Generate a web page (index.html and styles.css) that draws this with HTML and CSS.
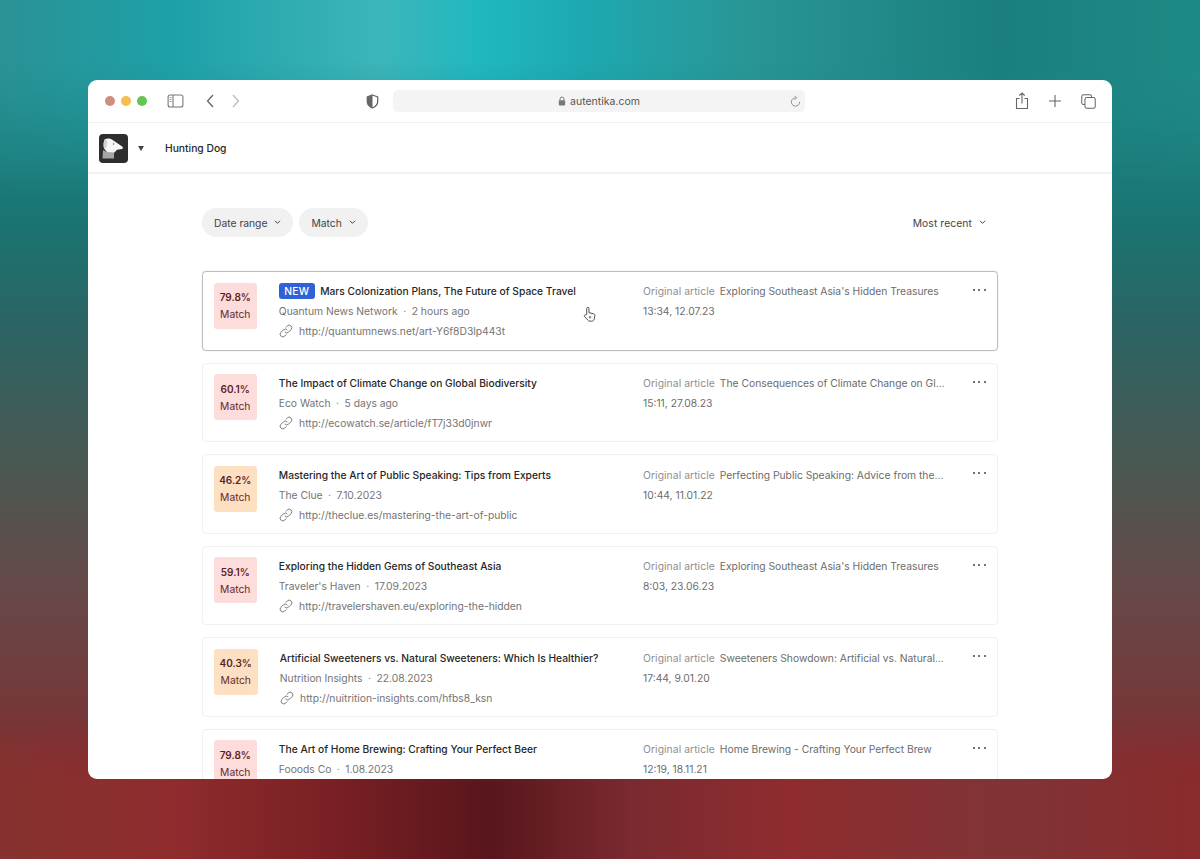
FILE: index.html
```html
<!DOCTYPE html>
<html lang="en">
<head>
<meta charset="utf-8">
<title>Autentika</title>
<link rel="stylesheet" href="styles.css">
</head>
<body>
<div class="window">
  <div class="toolbar">
    <div class="lights"><span class="light red"></span><span class="light yellow"></span><span class="light green"></span></div>
    <svg class="ico sidebar" viewBox="0 0 16 14" width="17" height="14"><rect x=".6" y="1" width="14.8" height="12" rx="2" fill="none" stroke="#777" stroke-width="1.1"/><path d="M5.5 1v12" stroke="#777" stroke-width="1.1"/><path d="M2.2 3.5h1.8M2.2 5.5h1.8M2.2 7.5h1.8" stroke="#999" stroke-width="1"/></svg>
    <svg class="ico back" viewBox="0 0 10 16" width="10" height="16"><path d="M8 2 2.500 8 8 14" fill="none" stroke="#666" stroke-width="1.300"/></svg>
    <svg class="ico forward" viewBox="0 0 10 16" width="10" height="16"><path d="M2 2 7.500 8 2 14" fill="none" stroke="#bbb" stroke-width="1.300"/></svg>
    <svg class="ico shield" viewBox="0 0 14 16" width="13" height="15"><path d="M7 1 12.600 3v5c0 3.300-2.400 5.500-5.600 7C3.800 13.500 1.400 11.300 1.400 8V3z" fill="#fff" stroke="#666" stroke-width="1.400"/><path d="M7 1 1.400 3v5c0 3.300 2.400 5.500 5.600 7z" fill="#666"/></svg>
    <div class="address">
      <svg viewBox="0 0 10 12" width="8" height="10"><path d="M2.500 5V3.500a2.500 2.500 0 0 1 5 0V5" fill="none" stroke="#777" stroke-width="1.200"/><rect x="1" y="5" width="8" height="6.500" rx="1" fill="#777"/></svg>
      <span>autentika.com</span>
      <svg class="reload" viewBox="0 0 12 14" width="11" height="13"><path d="M6 3a4.500 4.500 0 1 0 4.500 4.500" fill="none" stroke="#888" stroke-width="1"/><path d="M5 .8 7.200 3 5 5.200" fill="none" stroke="#888" stroke-width="1"/></svg>
    </div>
    <div class="tools">
      <svg viewBox="0 0 14 18" width="14" height="18"><path d="M4.500 6.500H1.500v10h11v-10H9.500M7 11.500V1M4.300 3.500 7 1l2.700 2.500" fill="none" stroke="#666" stroke-width="1.100"/></svg>
      <svg viewBox="0 0 14 14" width="14" height="14"><path d="M7 1v12M1 7h12" stroke="#666" stroke-width="1.100"/></svg>
      <svg viewBox="0 0 16 16" width="15" height="15"><rect x=".8" y=".8" width="10.500" height="10.500" rx="2" fill="none" stroke="#666" stroke-width="1.100"/><rect x="4.200" y="3.800" width="11" height="11.400" rx="2" fill="#fff" stroke="#666" stroke-width="1.100"/></svg>
    </div>
  </div>
  <div class="appbar">
    <div class="logo">
      <svg viewBox="0 0 29 29" width="29" height="29"><rect width="29" height="29" rx="4" fill="#2e2e2e"/><path d="M4 16 3.500 24.500H15V18H8z" fill="#a6a6a6"/><path d="M6 5C9 3.800 12 4.500 14 6.200L23.500 12.800c.8.800.5 2-.6 2.200L18 15.800 15.500 18.500 8 18 5 14.500C4.200 11 4.500 7 6 5z" fill="#f6f6f6"/><path d="M6 5.200C7.500 5 8.300 6.500 8.300 9c0 2.500-.6 4.500-2.300 6l-1-.5C4.200 11 4.500 7 6 5.200z" fill="#d2d2d2"/><circle cx="14.500" cy="10" r=".7" fill="#555"/></svg>
    </div>
    <span class="caret"></span>
    <span class="appname">Hunting Dog</span>
  </div>
  <main class="content">
    <div class="filters">
      <button class="pill">Date range <svg class="chev" viewBox="0 0 8 6" width="7" height="5"><path d="M1 1l3 3 3-3" fill="none" stroke="#444" stroke-width="1.200"/></svg></button>
      <button class="pill">Match <svg class="chev" viewBox="0 0 8 6" width="7" height="5"><path d="M1 1l3 3 3-3" fill="none" stroke="#444" stroke-width="1.200"/></svg></button>
      <button class="sort">Most recent <svg class="chev" viewBox="0 0 8 6" width="7" height="5"><path d="M1 1l3 3 3-3" fill="none" stroke="#444" stroke-width="1.200"/></svg></button>
    </div>
    <div class="list">
      <article class="card hover">
        <div class="score red-score"><b>79.8%</b><span>Match</span></div>
        <div class="info">
          <h3><span class="new">NEW</span>Mars Colonization Plans, The Future of Space Travel</h3>
          <p>Quantum News Network<i>·</i>2 hours ago</p>
          <p class="url"><svg class="link" viewBox="0 0 16 16" width="14" height="14"><use href="#link"/></svg>http://quantumnews.net/art-Y6f8D3lp443t</p>
        </div>
        <div class="orig">
          <p class="origline"><em>Original article</em><span>Exploring Southeast Asia's Hidden Treasures</span></p>
          <p>13:34, 12.07.23</p>
        </div>
        <div class="more"><s></s><s></s><s></s></div>
        <svg class="cursor" viewBox="0 0 14 18" width="13" height="17"><path d="M4 9V2.500a1.200 1.200 0 0 1 2.400 0V7l5 1.200c1 .3 1.600 1 1.400 2.200l-.8 3.600c-.3 1.300-1.300 2.200-2.700 2.200H7.500c-1 0-1.800-.4-2.400-1.200L1.500 11c-.6-.9.700-2.300 1.800-1.400z" fill="#fff" stroke="#444" stroke-width="1"/><circle cx="7.500" cy="12" r="1.300" fill="#888"/></svg>
      </article>
      <article class="card">
        <div class="score red-score"><b>60.1%</b><span>Match</span></div>
        <div class="info">
          <h3>The Impact of Climate Change on Global Biodiversity</h3>
          <p>Eco Watch<i>·</i>5 days ago</p>
          <p class="url"><svg class="link" viewBox="0 0 16 16" width="14" height="14"><use href="#link"/></svg>http://ecowatch.se/article/fT7j33d0jnwr</p>
        </div>
        <div class="orig">
          <p class="origline"><em>Original article</em><span>The Consequences of Climate Change on Gl...</span></p>
          <p>15:11, 27.08.23</p>
        </div>
        <div class="more"><s></s><s></s><s></s></div>
      </article>
      <article class="card">
        <div class="score orange-score"><b>46.2%</b><span>Match</span></div>
        <div class="info">
          <h3>Mastering the Art of Public Speaking: Tips from Experts</h3>
          <p>The Clue<i>·</i>7.10.2023</p>
          <p class="url"><svg class="link" viewBox="0 0 16 16" width="14" height="14"><use href="#link"/></svg>http://theclue.es/mastering-the-art-of-public</p>
        </div>
        <div class="orig">
          <p class="origline"><em>Original article</em><span>Perfecting Public Speaking: Advice from the...</span></p>
          <p>10:44, 11.01.22</p>
        </div>
        <div class="more"><s></s><s></s><s></s></div>
      </article>
      <article class="card">
        <div class="score red-score"><b>59.1%</b><span>Match</span></div>
        <div class="info">
          <h3>Exploring the Hidden Gems of Southeast Asia</h3>
          <p>Traveler's Haven<i>·</i>17.09.2023</p>
          <p class="url"><svg class="link" viewBox="0 0 16 16" width="14" height="14"><use href="#link"/></svg>http://travelershaven.eu/exploring-the-hidden</p>
        </div>
        <div class="orig">
          <p class="origline"><em>Original article</em><span>Exploring Southeast Asia's Hidden Treasures</span></p>
          <p>8:03, 23.06.23</p>
        </div>
        <div class="more"><s></s><s></s><s></s></div>
      </article>
      <article class="card">
        <div class="score orange-score wide"><b>40.3%</b><span>Match</span></div>
        <div class="info">
          <h3>Artificial Sweeteners vs. Natural Sweeteners: Which Is Healthier?</h3>
          <p>Nutrition Insights<i>·</i>22.08.2023</p>
          <p class="url"><svg class="link" viewBox="0 0 16 16" width="14" height="14"><use href="#link"/></svg>http://nuitrition-insights.com/hfbs8_ksn</p>
        </div>
        <div class="orig">
          <p class="origline"><em>Original article</em><span>Sweeteners Showdown: Artificial vs. Natural...</span></p>
          <p>17:44, 9.01.20</p>
        </div>
        <div class="more"><s></s><s></s><s></s></div>
      </article>
      <article class="card">
        <div class="score red-score"><b>79.8%</b><span>Match</span></div>
        <div class="info">
          <h3>The Art of Home Brewing: Crafting Your Perfect Beer</h3>
          <p>Fooods Co<i>·</i>1.08.2023</p>
        </div>
        <div class="orig">
          <p class="origline"><em>Original article</em><span>Home Brewing - Crafting Your Perfect Brew</span></p>
          <p>12:19, 18.11.21</p>
        </div>
        <div class="more"><s></s><s></s><s></s></div>
      </article>
    </div>
  </main>
</div>
<svg class="defs" width="0" height="0"><defs><g id="link" fill="none" stroke="#777" stroke-width="1.100" stroke-linecap="round"><path d="M6.700 9.300a3 3 0 0 0 4.300 0l2.800-2.800a3 3 0 0 0-4.300-4.300L8 3.700"/><path d="M9.300 6.700a3 3 0 0 0-4.300 0L2.200 9.500a3 3 0 0 0 4.300 4.300L8 12.300"/></g></defs></svg>
</body>
</html>
```
FILE: styles.css
```css
* { box-sizing: border-box; }
html, body { height: 100%; }
body {
  position: relative;
  margin: 0;
  height: 859px;
  overflow: hidden;
  padding: 80px 88px;
  font-family: Inter, "Liberation Sans", sans-serif;
  background: linear-gradient(180deg, #1f8f8f 0%, #1a7472 26%, #2b6463 38%, #50554f 57%, #684748 70%, #763739 83%, #8a2c2e 93%, #8a2a2c 100%);
}
body::before,
body::after {
  content: "";
  position: absolute;
  left: 0;
  right: 0;
}
body::before {
  top: 0;
  height: 200px;
  background: linear-gradient(90deg, #2a9295 0, #1ea0a8 170px, #3cb6ba 380px, #20b8c0 480px, #1ea8b0 590px, #2a9595 750px, #1a7f7e 1000px, #1f8a85 1200px);
  -webkit-mask-image: linear-gradient(180deg, #000 60px, transparent 200px);
  mask-image: linear-gradient(180deg, #000 60px, transparent 200px);
}
body::after {
  bottom: 0;
  height: 140px;
  background: linear-gradient(90deg, #86322f 0, #8f2c2e 170px, #7a2024 330px, #58161c 490px, #7a2a30 630px, #8f2c2f 790px, #803436 1000px, #8a2a2c 1200px);
  -webkit-mask-image: linear-gradient(0deg, #000 75px, transparent 140px);
  mask-image: linear-gradient(0deg, #000 75px, transparent 140px);
}
p, h3 { margin: 0; }
.defs { position: absolute; }
.window {
  position: relative;
  z-index: 1;
  width: 1024px;
  height: 699px;
  background: #fff;
  border-radius: 9px;
  overflow: hidden;
}
.toolbar {
  height: 43px;
  display: flex;
  align-items: center;
  padding-left: 17px;
  border-bottom: 1px solid #f1f1f1;
}
.lights { display: flex; gap: 6px; }
.light { width: 10px; height: 10px; border-radius: 50%; }
.red { background: #cf8f80; }
.yellow { background: #f6bd4f; }
.green { background: #62c554; }
.sidebar { margin-left: 20px; }
.back { margin-left: 21px; }
.forward { margin-left: 16px; }
.shield { margin-left: 125px; }
.address {
  position: relative;
  width: 412px;
  height: 22px;
  margin-left: 14px;
  border-radius: 5px;
  background: #f4f4f4;
  display: flex;
  align-items: center;
  justify-content: center;
  gap: 4px;
  font-size: 10.500px;
  color: #555;
}
.reload { position: absolute; right: 4px; top: 5px; }
.tools {
  display: flex;
  align-items: center;
  gap: 19px;
  margin-left: 210px;
}
.appbar {
  height: 51px;
  display: flex;
  align-items: center;
  padding-left: 11px;
  padding-top: 1px;
  border-bottom: 2px solid #f2f2f2;
}
.logo { height: 29px; }
.caret {
  width: 0;
  height: 0;
  margin-left: 10px;
  border-left: 3.500px solid transparent;
  border-right: 3.500px solid transparent;
  border-top: 5px solid #444;
}
.appname { margin-left: 21px; font-size: 10.300px; font-weight: 500; color: #2a2a2a; }
.content { padding: 34px 114px 0; }
.filters { display: flex; align-items: flex-start; gap: 6px; height: 30px; }
button { font: inherit; border: 0; color: #444; }
.pill {
  height: 29px;
  padding: 0 12px;
  border-radius: 15px;
  background: #f1f1f1;
  font-size: 10.300px;
  display: flex;
  align-items: center;
  gap: 7px;
}
.sort {
  height: 29px;
  margin-left: auto;
  margin-right: 12px;
  background: none;
  font-size: 10.300px;
  letter-spacing: .1px;
  display: flex;
  align-items: center;
  gap: 7px;
  padding: 0;
}
.list { margin-top: 33px; display: flex; flex-direction: column; gap: 12px; }
.card {
  position: relative;
  flex: none;
  height: 79.600px;
  border: 1px solid #f0f0f0;
  border-radius: 4px;
  display: flex;
  padding: 10.500px 11px 0;
}
.hover { border-color: #bdbdbd; box-shadow: 0 0 1px #bbb; }
.score {
  flex: none;
  width: 42.500px;
  height: 46px;
  border-radius: 3px;
  display: flex;
  flex-direction: column;
  align-items: center;
  justify-content: center;
  gap: 3px;
  font-size: 10.300px;
  line-height: 14px;
  color: #6a2a2a;
}
.score b { font-size: 10px; font-weight: 600; color: #5c1f1f; }
.wide { width: 43.500px; }
.red-score { background: #fddcdc; }
.orange-score { background: #fde0c2; }
.info {
  flex: 1;
  margin-left: 22.300px;
  padding-top: 1px;
  font-size: 10.300px;
  line-height: 20px;
  color: #747474;
}
.info h3 { font-size: 10.250px; font-weight: 500; color: #262626; line-height: 16px; margin-bottom: 2px; display: flex; align-items: center; white-space: nowrap; }
.new {
  background: #2f62d6;
  color: #fff;
  font-weight: 500;
  border-radius: 3px;
  padding: 0 5.500px;
  margin-right: 5.500px;
  letter-spacing: .2px;
}
.info i { font-style: normal; margin: 0 5.500px; }
.url { display: flex; align-items: center; gap: 6.300px; }
.orig { flex: none; width: 343px; padding-top: 1px; font-size: 10.300px; line-height: 20px; color: #6c6c6c; }
.origline { display: flex; gap: 5px; height: 16px; line-height: 16px; margin-bottom: 2px; white-space: nowrap; }
.orig em { font-style: normal; color: #8f8f8f; letter-spacing: .08px; }
.hover .info, .hover .orig { padding-top: 0; }
.more { position: absolute; right: 11.500px; top: 17px; display: flex; gap: 3.500px; }
.more s { width: 2px; height: 2px; border-radius: 50%; background: #444; }
.cursor { position: absolute; left: 380px; top: 34px; }
```
